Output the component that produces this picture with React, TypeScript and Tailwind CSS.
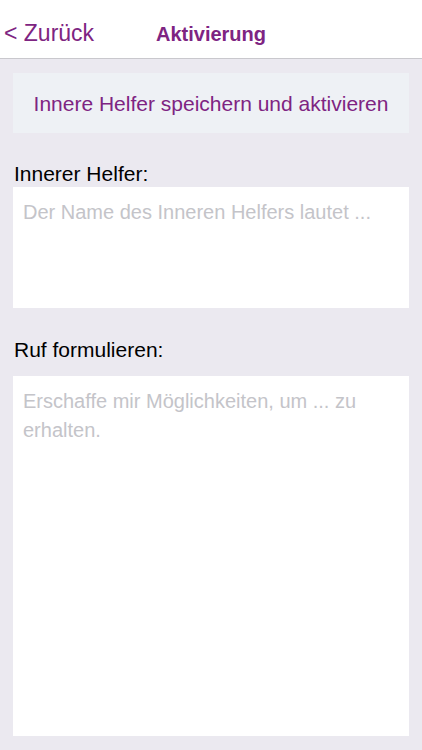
export default function App() {
  const font = { fontFamily: '"Liberation Sans", Arial, sans-serif' };
  return (
    <div className="w-[422px] h-[750px] bg-[#ebe9f0] flex flex-col overflow-hidden" style={font}>
      <div className="h-[59px] bg-white border-b border-[#c9c8cd] flex items-baseline pt-[22px] shrink-0">
        <div className="w-[156px] pl-[4px] text-[23px] text-[#7e2482] leading-none">&lt; Zurück</div>
        <div className="text-[20px] font-bold text-[#7e2482] leading-none">Aktivierung</div>
      </div>
      <div className="px-[13px] pt-[14px] flex flex-col">
        <div className="h-[60px] bg-[#eef1f5] flex items-center justify-center text-[21px] text-[#7e2482] leading-none">
          Innere Helfer speichern und aktivieren
        </div>
        <div className="mt-[30px] pl-[1px] text-[21px] text-black leading-none">Innerer Helfer:</div>
        <div className="mt-[3px] h-[121px] bg-white px-[10px] pt-[15px] text-[20px] text-[#c4c4c9] leading-none">
          Der Name des Inneren Helfers lautet ...
        </div>
        <div className="mt-[31px] pl-[1px] text-[21px] text-black leading-none">Ruf formulieren:</div>
        <div className="mt-[16px] h-[360px] bg-white pl-[10px] pr-[12px] pt-[11px] text-[20px] text-[#c4c4c9] leading-[29px]">
          Erschaffe mir Möglichkeiten, um ... zu erhalten.
        </div>
      </div>
    </div>
  );
}
